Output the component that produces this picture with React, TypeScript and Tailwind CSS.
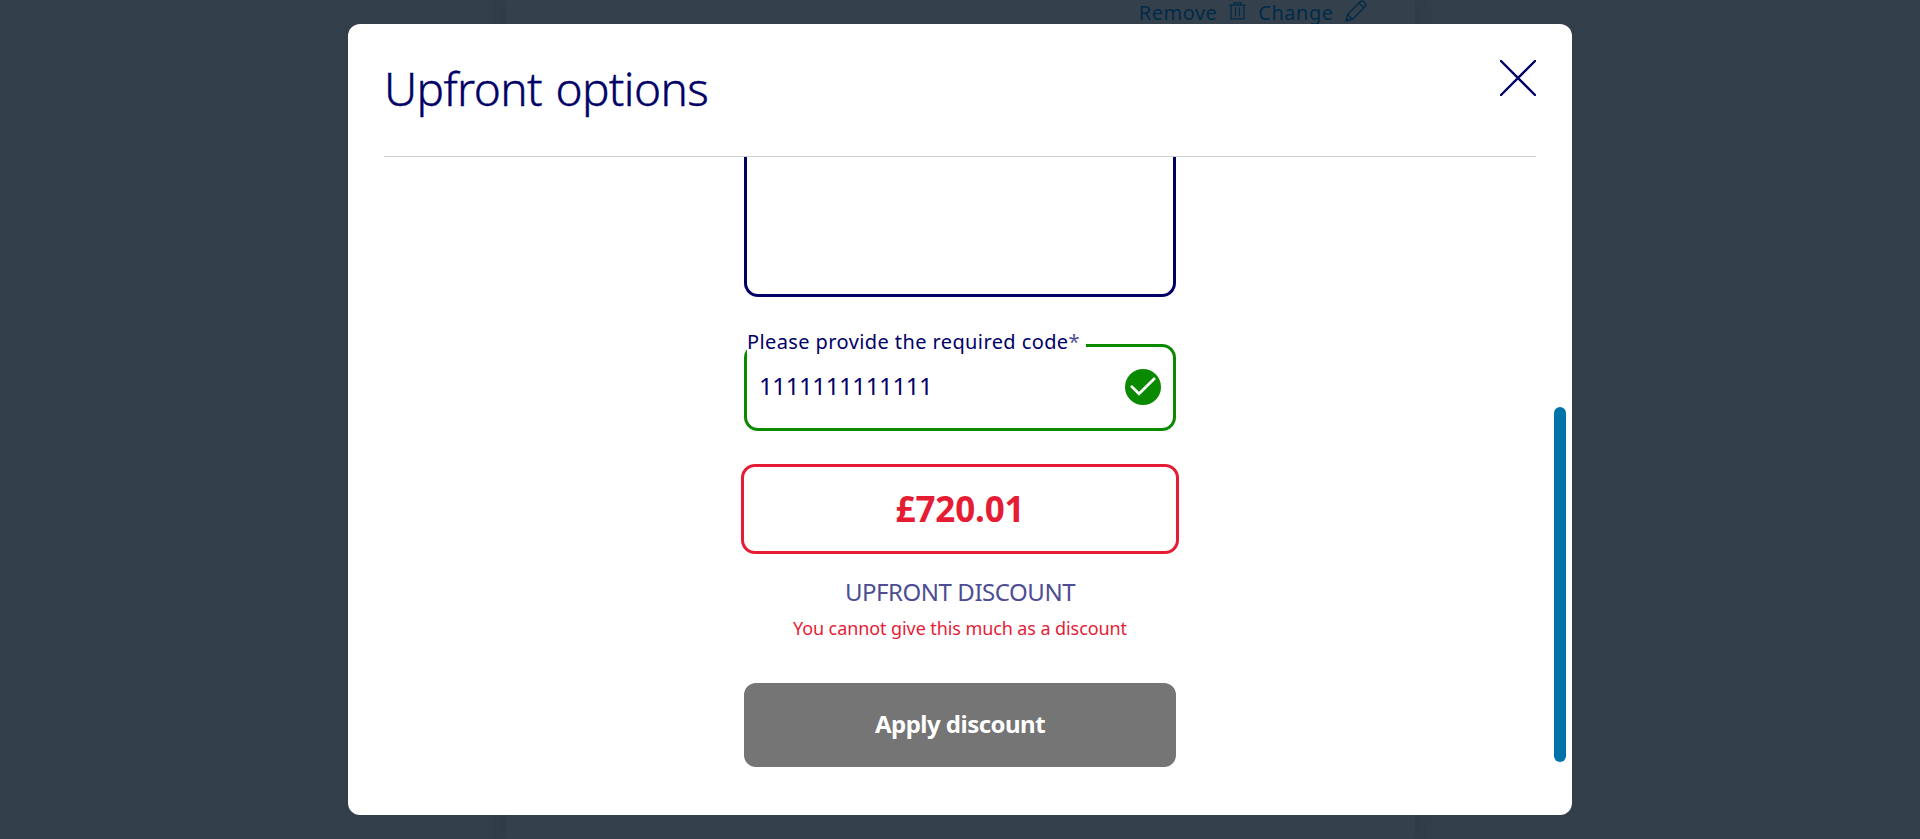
import React from "react";

function TrashIcon() {
  return (
    <svg className="h-[18px] w-[17px]" viewBox="0 0 17 18" fill="none" stroke="currentColor" strokeWidth="1.2">
      <path d="M0.3 3.2H16.7M2 3.5V16.8H15V3.5M5 3V0.8H12V3M6.5 5.5V14.5M10.5 5.5V14.5" />
    </svg>
  );
}

function PencilIcon() {
  return (
    <svg className="h-[22px] w-[22px]" viewBox="0 0 22 22" fill="none" stroke="currentColor" strokeWidth="1.3" strokeLinejoin="round">
      <path d="M1 21L2.5 14.5L15.5 1.5Q17 0.2 18.8 1.8L20.2 3.2Q21.6 5 20.2 6.5L7.5 19.2ZM2.5 14.5L7.5 19.2M14 3L19 7.8M1 21L3.5 20.4L1.6 18.5Z" />
    </svg>
  );
}

function CheckBadge() {
  return (
    <svg className="size-9" viewBox="0 0 36 36" fill="none">
      <circle cx="18" cy="18" r="18" fill="#0a8a00" />
      <path d="M6 16.9L14 24.8L30 9" stroke="#fff" strokeWidth="2.7" />
    </svg>
  );
}

function CloseIcon() {
  return (
    <svg className="size-9" viewBox="0 0 36 36" fill="none" stroke="currentColor" strokeWidth="2.4" strokeLinecap="round">
      <path d="M1 1L35 35M35 1L1 35" />
    </svg>
  );
}

export default function App() {
  return (
    <div className="relative h-[839px] w-full overflow-hidden bg-[#333e4b] font-['Noto_Sans',sans-serif] text-[#000066]">
      <div className="mx-auto flex h-full w-[909px] justify-end bg-[#35404d] pr-12 text-[#002b47] shadow-[0_0_18px_rgba(0,0,0,0.07)]">
        <div className="flex items-start text-[20px] leading-[26px] tracking-[0.5px]">
          <span>Remove</span>
          <span className="mt-0.5 ml-3"><TrashIcon /></span>
          <span className="ml-3">Change</span>
          <span className="ml-[11px]"><PencilIcon /></span>
        </div>
      </div>

      <div className="absolute inset-0 flex items-start justify-center pt-6">
        <section className="flex h-[791px] w-[1224px] flex-col rounded-xl bg-white">
          <header className="mx-9 flex h-[133px] shrink-0 justify-between border-b border-[#cccfd0]">
            <h1 className="pt-[30px] text-[46px] leading-[68px] font-light tracking-[-0.62px] [-webkit-text-stroke:0.4px_#000066] [word-spacing:2px]">Upfront options</h1>
            <button className="mt-9 size-9"><CloseIcon /></button>
          </header>

          <div className="flex min-h-0 flex-1">
            <div className="flex flex-1 flex-col items-center overflow-hidden pl-[18px]">
              <div className="h-[140px] w-[432px] shrink-0 rounded-b-[14px] border-3 border-t-0 border-[#000066]" />

              <div className="relative mt-[47px] flex h-[87px] w-[432px] shrink-0 items-center justify-between rounded-[14px] border-3 border-[#0a8a00] pr-3 pb-[2px] pl-3">
                <label className="absolute -top-[19px] left-0 h-[27px] w-[339px] bg-white text-[20px] leading-[27px] tracking-[0.4px] whitespace-nowrap">
                  <span>Please provide the required code</span><span className="opacity-70">*</span>
                </label>
                <span className="-mt-0.5 text-[24px] leading-8 tracking-[-0.39px]">1111111111111</span>
                <CheckBadge />
              </div>

              <div className="mt-[33px] flex h-[90px] w-[438px] shrink-0 items-center justify-center rounded-[14px] border-3 border-[#e61c35] pb-px text-[35px] leading-[48px] font-bold tracking-[-0.15px] text-[#e61c35]">
                £720.01
              </div>
              <p className="mt-[22px] text-[24px] leading-8 tracking-[-0.45px] text-[#4d4d94]">UPFRONT DISCOUNT</p>
              <p className="mt-2 text-[18px] leading-6 tracking-[-0.09px] text-[#e61c35]">You cannot give this much as a discount</p>
              <button className="mt-[43px] flex h-[84px] w-[432px] shrink-0 items-center justify-center rounded-xl bg-[#757575] pb-0.5 text-[24px] font-bold tracking-[-0.52px] text-white">
                Apply discount
              </button>
            </div>
            <div className="flex w-[18px] shrink-0 flex-col">
              <div className="mt-[250px] h-[355px] w-3 rounded-full bg-[#0073ab]" />
            </div>
          </div>
        </section>
      </div>
    </div>
  );
}
